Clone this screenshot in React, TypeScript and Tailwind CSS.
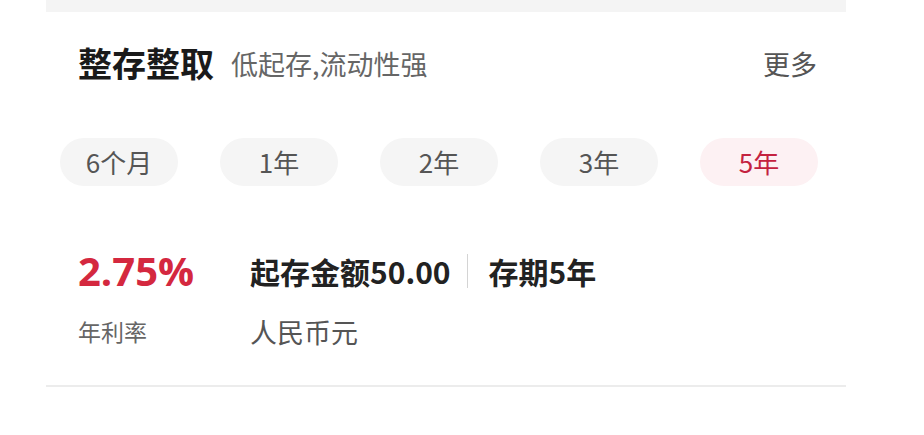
import React from "react";

const terms = ["6个月", "1年", "2年", "3年", "5年"];

export default function App() {
  return (
    <div className="w-[924px] h-[435px] bg-white" style={{ fontFamily: '"Noto Sans CJK SC", "Noto Sans", sans-serif' }}>
      <div className="ml-[46px] w-[800px]">
        <div className="h-[12px] bg-[#f4f4f4]" />
        <div className="h-[102px] flex items-center pl-[32px] pr-[29px]">
          <span className="text-[34px] leading-none font-bold text-[#1a1a1a]">整存整取</span>
          <span className="ml-[17px] text-[27px] leading-none text-[#666666]">低起存,流动性强</span>
          <span className="ml-auto text-[27px] leading-none text-[#555555]">更多</span>
        </div>
        <div className="mt-[24px] flex gap-[42px] pl-[14px]">
          {terms.map((t, i) => (
            <div
              key={t}
              className={
                i === 4
                  ? "w-[118px] h-[48px] rounded-full flex items-center justify-center text-[26px] leading-none bg-[#fdf1f3] text-[#c4223f]"
                  : "w-[118px] h-[48px] rounded-full flex items-center justify-center text-[26px] leading-none bg-[#f5f5f5] text-[#555555]"
              }
            >
              {t}
            </div>
          ))}
        </div>
        <div className="mt-[63px] pl-[32px] flex">
          <div className="w-[172px] flex flex-col">
            <div className="h-[44px] flex items-center text-[40px] leading-none font-bold text-[#d4283f]" style={{ fontFamily: '"Open Sans", "Noto Sans", sans-serif' }}>2.75%</div>
            <div className="mt-[23px] h-[30px] flex items-center text-[23px] leading-none text-[#666666]">年利率</div>
          </div>
          <div className="flex flex-col">
            <div className="h-[44px] flex items-center text-[30px] leading-none font-bold text-[#222222]">
              <span>起存金额50.00</span>
              <span className="ml-[16px] mr-[21px] w-px h-[34px] bg-[#d4d4d4]" />
              <span>存期5年</span>
            </div>
            <div className="mt-[23px] h-[30px] flex items-center text-[27px] leading-none text-[#555555]">人民币元</div>
          </div>
        </div>
        <div className="mt-[39px] h-[2px] bg-[#ececec]" />
      </div>
    </div>
  );
}
